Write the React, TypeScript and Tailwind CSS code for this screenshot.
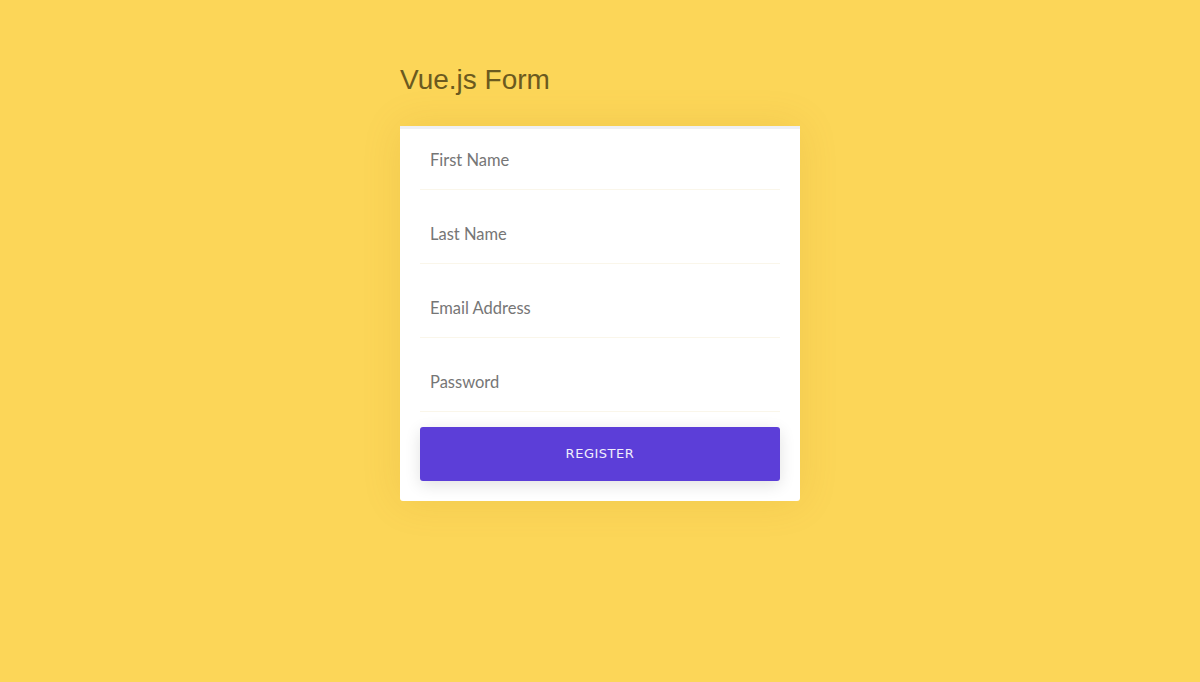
const fields = ['First Name', 'Last Name', 'Email Address', 'Password'];

export default function App() {
  return (
    <div className="min-h-screen bg-[#fcd658] flex justify-center">
      <div className="w-[400px] mt-[63px]">
        <h1
          className="text-[28px] leading-[33px] text-[#6b5a1f]"
          style={{ fontFamily: '"Liberation Sans", Arial, sans-serif' }}
        >
          Vue.js Form
        </h1>
        <form
          className="mt-[30px] bg-white border-t-[3px] border-[#eef0f5] px-5 pb-5 rounded-b-[3px] shadow-[0_0_40px_rgba(160,110,0,0.12)]"
          style={{ fontFamily: 'Lato, "Open Sans", sans-serif' }}
          onSubmit={(e) => e.preventDefault()}
        >
          {fields.map((f) => (
            <input
              key={f}
              type={f === 'Password' ? 'password' : 'text'}
              placeholder={f}
              className="block w-full h-[61px] mb-[13px] pl-[10px] pr-[10px] pt-[1px] text-[16.5px] text-[#555] placeholder:text-[#767676] border-b border-[#faf6ea] outline-none bg-white"
            />
          ))}
          <button
            type="submit"
            className="block w-full h-[54px] mt-[15px] rounded-[3px] bg-[#5c3ed8] text-[#f0eefc] text-[13px] tracking-[0.04em] shadow-[0_4px_16px_rgba(0,0,0,0.12)]"
            style={{ fontFamily: '"DejaVu Sans", sans-serif' }}
          >
            REGISTER
          </button>
        </form>
      </div>
    </div>
  );
}
